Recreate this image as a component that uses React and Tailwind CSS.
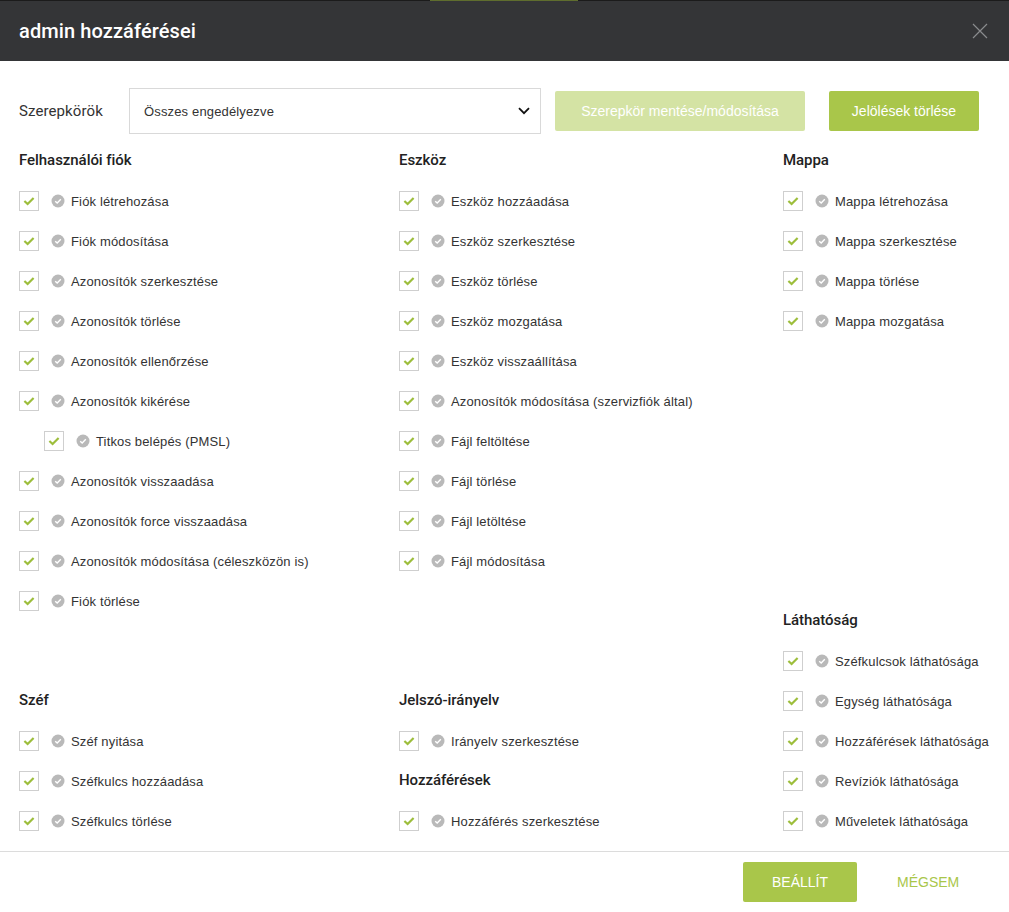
const CheckRow = ({ label, nested }) => (
  <div className={`h-10 flex items-center ${nested ? 'pl-[25px]' : ''}`}>
    <span className="w-5 h-5 border border-[#cfcfcf] flex items-center justify-center shrink-0">
      <svg className="w-3 h-3" viewBox="0 0 12 12" fill="none">
        <path d="M1.4 6 4.6 9 10.6 3" stroke="#9dbe3c" strokeWidth="2.2" />
      </svg>
    </span>
    <svg className="w-[14px] h-[14px] ml-[12px] mr-[6px] shrink-0" viewBox="0 0 14 14" fill="none">
      <circle cx="7" cy="7" r="6.5" fill="#b9b9b9" />
      <path d="M4.2 7.2 6.2 9 9.8 5.2" stroke="#fff" strokeWidth="1.4" />
    </svg>
    <span className="pt-px text-[13px] tracking-[0.15px] text-[#333] whitespace-nowrap">{label}</span>
  </div>
);

const Section = ({ title, items, className = '' }) => (
  <div className={className}>
    <h3 className="h-[41px] pb-px flex items-center text-[15px] tracking-[-0.05px] font-medium text-[#222] font-['Roboto',sans-serif]">
      {title}
    </h3>
    {items.map((item) => (
      <CheckRow key={item.label || item} label={item.label || item} nested={item.nested} />
    ))}
  </div>
);

const accountItems = [
  'Fiók létrehozása',
  'Fiók módosítása',
  'Azonosítók szerkesztése',
  'Azonosítók törlése',
  'Azonosítók ellenőrzése',
  'Azonosítók kikérése',
  { label: 'Titkos belépés (PMSL)', nested: true },
  'Azonosítók visszaadása',
  'Azonosítók force visszaadása',
  'Azonosítók módosítása (céleszközön is)',
  'Fiók törlése',
];

const deviceItems = [
  'Eszköz hozzáadása',
  'Eszköz szerkesztése',
  'Eszköz törlése',
  'Eszköz mozgatása',
  'Eszköz visszaállítása',
  'Azonosítók módosítása (szervizfiók által)',
  'Fájl feltöltése',
  'Fájl törlése',
  'Fájl letöltése',
  'Fájl módosítása',
];

const folderItems = ['Mappa létrehozása', 'Mappa szerkesztése', 'Mappa törlése', 'Mappa mozgatása'];

const visibilityItems = [
  'Széfkulcsok láthatósága',
  'Egység láthatósága',
  'Hozzáférések láthatósága',
  'Revíziók láthatósága',
  'Műveletek láthatósága',
];

const safeItems = ['Széf nyitása', 'Széfkulcs hozzáadása', 'Széfkulcs törlése'];

export default function App() {
  return (
    <div className="h-[912px] overflow-hidden bg-white font-['Liberation_Sans',Arial,sans-serif]">
      <div className="h-px bg-[#1b1b1b]">
        <div className="ml-[430px] w-[148px] h-px bg-[#5f6d2e]" />
      </div>
      <header className="h-[60px] bg-[#343537] pl-[19px] pr-[21px] flex items-center justify-between">
        <h2 className="text-[20px] tracking-[0.1px] font-medium text-white font-['Roboto',sans-serif]">admin hozzáférései</h2>
        <svg className="w-[16px] h-[16px]" viewBox="0 0 16 16" fill="none">
          <path d="M1 1 15 15M15 1 1 15" stroke="#8a8b8d" strokeWidth="1.2" />
        </svg>
      </header>

      <div className="h-[79px] pl-[19px] pt-[27px] flex items-start">
        <span className="w-[110px] h-[46px] flex items-center text-[15px] tracking-[0.1px] text-[#333] font-['Roboto',sans-serif]">
          Szerepkörök
        </span>
        <div className="w-[412px] h-[46px] border border-[#d9d9d9] pl-[14px] pr-[10px] flex items-center justify-between">
          <span className="pt-px text-[13px] tracking-[0.15px] text-[#333]">Összes engedélyezve</span>
          <svg className="w-[12px] h-[8px]" viewBox="0 0 12 8" fill="none">
            <path d="M1 1.2 6 6.2 11 1.2" stroke="#111" strokeWidth="1.8" />
          </svg>
        </div>
        <button className="ml-[14px] mt-[3px] pt-px w-[250px] h-10 rounded-[2px] bg-[#d4e3a4] text-white text-[14px]">
          Szerepkör mentése/módosítása
        </button>
        <button className="ml-[24px] mt-[3px] pt-px w-[150px] h-10 rounded-[2px] bg-[#a9c64a] text-white text-[14px]">
          Jelölések törlése
        </button>
      </div>

      <div className="h-[711px] pl-[19px] flex">
        <div className="w-[380px]">
          <Section title="Felhasználói fiók" items={accountItems} />
          <Section title="Széf" items={safeItems} className="mt-[59px]" />
        </div>
        <div className="w-[384px]">
          <Section title="Eszköz" items={deviceItems} />
          <Section title="Jelszó-irányelv" items={['Irányelv szerkesztése']} className="mt-[99px]" />
          <Section title="Hozzáférések" items={['Hozzáférés szerkesztése']} className="-mt-px" />
        </div>
        <div>
          <Section title="Mappa" items={folderItems} />
          <Section title="Láthatóság" items={visibilityItems} className="mt-[259px]" />
        </div>
      </div>

      <footer className="h-[61px] border-t border-[#dcdcdc] pt-[10px] pl-[743px] flex items-start">
        <button className="w-[114px] h-10 rounded-[2px] bg-[#a9c64a] text-white text-[14px]">BEÁLLÍT</button>
        <button className="ml-[40px] pt-px h-10 text-[#a9c64a] text-[14px]">MÉGSEM</button>
      </footer>
    </div>
  );
}
